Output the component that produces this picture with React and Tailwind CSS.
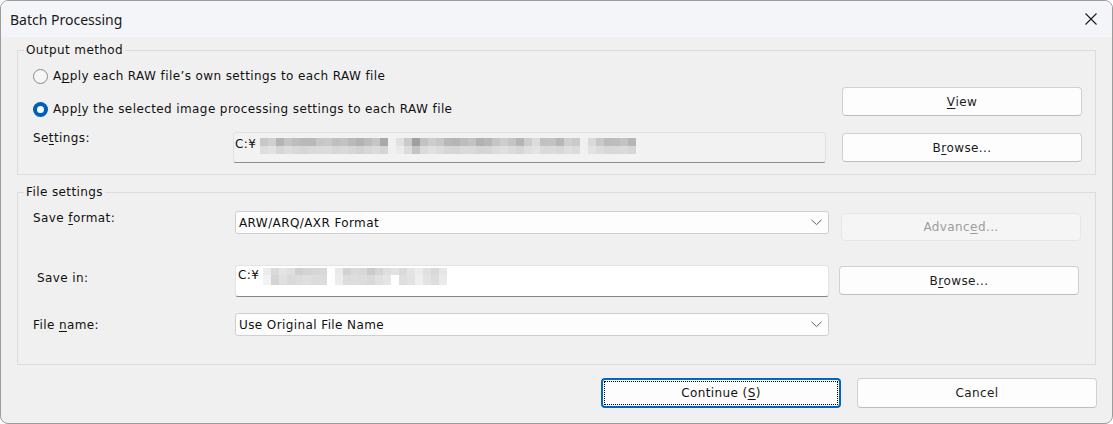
import React from 'react';

// pixelated path placeholder (two rows of grey blocks)
const settingsPath = [
  ['#c8c8c8', '#cfcfcf', '#b4b4b4', '#c4c4c4', '#bdbdbd', '#b9b9b9', '#b9b9b9', '#c6c6c6', '#c9c9c9', '#bfbfbf', '#c3c3c3', '#b9b9b9', '#b2b2b2', '#bcbcbc', '#c6c6c6', '#a8a8a8', '#f0f0f0', '#e0e0e0', '#cacaca', '#9f9f9f', '#c2c2c2', '#cdcdcd', '#c7c7c7', '#b8b8b8', '#b5b5b5', '#bdbdbd', '#c2c2c2', '#b1b1b1', '#b7b7b7', '#c5c5c5', '#cecece', '#c4c4c4', '#b5b5b5', '#cdcdcd', '#dcdcdc', '#c1c1c1', '#c3c3c3', '#b7b7b7', '#cfcfcf', '#cacaca', '#f0f0f0', '#dadada', '#c8c8c8', '#bbbbbb', '#bdbdbd', '#c3c3c3', '#b6b6b6'],
  ['#dedede', '#e2e2e2', '#d6d6d6', '#dcdcdc', '#d8d8d8', '#d6d6d6', '#d9d9d9', '#dadada', '#dbdbdb', '#d7d7d7', '#d9d9d9', '#d6d6d6', '#d2d2d2', '#d7d7d7', '#dbdbdb', '#d4d4d4', '#f0f0f0', '#eaeaea', '#dcdcdc', '#c4c4c4', '#dbdbdb', '#e0e0e0', '#dcdcdc', '#d6d6d6', '#d5d5d5', '#d9d9d9', '#dadada', '#d4d4d4', '#d6d6d6', '#dcdcdc', '#dfdfdf', '#dbdbdb', '#d6d6d6', '#dfdfdf', '#e3e3e3', '#dadada', '#dbdbdb', '#d8d8d8', '#dfdfdf', '#dcdcdc', '#f0f0f0', '#e3e3e3', '#dcdcdc', '#d7d7d7', '#d8d8d8', '#dadada', '#d6d6d6'],
];

const saveInPath = [
  ['#ececec', '#dadada', '#e4e4e4', '#dfdfdf', '#cfcfcf', '#d4d4d4', '#d6d6d6', '#d8d8d8', '#ffffff', '#e9e9e9', '#d2d2d2', '#dadada', '#d8d8d8', '#cbcbcb', '#d5d5d5', '#dedede', '#e2e2e2', '#dadada', '#e4e4e4', '#ebebeb', '#e0e0e0', '#d9d9d9', '#e6e6e6'],
  ['#f2f2f2', '#d4d4d4', '#e0e0e0', '#dadada', '#dcdcdc', '#dfdfdf', '#dcdcdc', '#dcdcdc', '#ffffff', '#ececec', '#dcdcdc', '#dedede', '#dcdcdc', '#d9d9d9', '#e0e0e0', '#e5e5e5', '#ffffff', '#dfdfdf', '#e2e2e2', '#eeeeee', '#e3e3e3', '#dddddd', '#eaeaea'],
];

const Mosaic = ({ rows, cell, rowHeights }) => (
  <div className="flex flex-col">
    {rows.map((row, r) => (
      <div key={r} className="flex">
        {row.map((c, i) => (
          <div key={i} style={{ width: cell, height: rowHeights[r], background: c }} />
        ))}
      </div>
    ))}
  </div>
);

const U = ({ children }) => <span className="underline underline-offset-2">{children}</span>;

const Button = ({ children, className = '', disabled = false }) => (
  <button
    disabled={disabled}
    className={
      'flex items-center justify-center rounded-[4px] border text-[12px] tracking-[0.4px] ' +
      (disabled
        ? 'bg-[#f5f5f5] border-[#e6e6e6] text-[#9d9d9d] '
        : 'bg-[#fdfdfd] border-[#d0d0d0] border-b-[#bebebe] text-[#1b1b1b] ') +
      className
    }
  >
    {children}
  </button>
);

const Chevron = () => (
  <svg width="11" height="7" viewBox="0 0 11 7" className="text-[#606060]">
    <path d="M0.5 0.8 L5.5 5.6 L10.5 0.8" fill="none" stroke="currentColor" strokeWidth="1" />
  </svg>
);

const Select = ({ value, className = '' }) => (
  <div
    className={
      'flex h-[23px] w-[594px] items-center justify-between rounded-[3px] border border-[#cfcfcf] bg-[#fdfdfd] pl-[3px] pr-[6px] ' +
      className
    }
  >
    <span className="text-[12px] text-[#111]">{value}</span>
    <Chevron />
  </div>
);

const Radio = ({ checked, children }) => (
  <div className="flex h-[20px] items-center gap-[5px]">
    {checked ? (
      <span className="flex h-[15px] w-[15px] items-center justify-center rounded-full bg-[#005fb8]">
        <span className="h-[7px] w-[7px] rounded-full bg-white" />
      </span>
    ) : (
      <span className="h-[15px] w-[15px] rounded-full border border-[#8a8a8a] bg-[#f6f6f6]" />
    )}
    <span className="text-[12px] text-[#111]">{children}</span>
  </div>
);

export default function App() {
  return (
    <div
      className="flex h-[424px] w-[1113px] flex-col overflow-hidden rounded-[8px] border border-[#9c9c9c] bg-[#f0f0f0] tracking-[0.4px] text-[#111]"
      style={{ fontFamily: '"DejaVu Sans", Verdana, sans-serif' }}
    >
      {/* title bar */}
      <div className="flex h-[36px] shrink-0 items-center justify-between bg-[#f3f5f8] pl-[9px] pr-[15px]">
        <span
          className="text-[14px] tracking-normal text-[#1a1a1a]"
          style={{ fontFamily: '"Noto Sans", sans-serif' }}
        >
          Batch Processing
        </span>
        <svg width="12" height="12" viewBox="0 0 12 12">
          <path d="M0.5 0.5 L11.5 11.5 M11.5 0.5 L0.5 11.5" stroke="#1a1a1a" strokeWidth="1.1" />
        </svg>
      </div>

      {/* output method */}
      <fieldset className="mx-[16px] mt-[5px] border border-[#dcdcdc] pb-[11px] pl-[15px] pr-[13px]">
        <legend className="-ml-[9px] px-[2px] text-[12px] leading-[16px]">Output method</legend>
        <div className="flex gap-[16px]">
          <div className="flex flex-1 flex-col pt-[8px]">
            <Radio>
              A<U>p</U>ply each RAW file’s own settings to each RAW file
            </Radio>
            <div className="mt-[13px]">
              <Radio checked>
                App<U>l</U>y the selected image processing settings to each RAW file
              </Radio>
            </div>
            <div className="mt-[13px] flex">
              <span className="w-[200px] text-[12px] leading-[13px]">
                Se<U>t</U>tings:
              </span>
              <div className="flex h-[31px] flex-1 items-start rounded-[3px] border border-[#e1e1e1] border-b-[#8c8c8c] bg-[#f2f2f2] pl-[1px] pt-[4px]">
                <span className="text-[12px] leading-[15px]">C:¥</span>
                <div className="ml-[4px] mt-[1px]">
                  <Mosaic rows={settingsPath} cell={8} rowHeights={[8, 8]} />
                </div>
              </div>
            </div>
          </div>
          <div className="flex w-[240px] flex-col gap-[17px] pt-[29px]">
            <Button className="h-[29px]">
              <U>V</U>iew
            </Button>
            <Button className="h-[29px]">
              B<U>r</U>owse...
            </Button>
          </div>
        </div>
      </fieldset>

      {/* file settings */}
      <fieldset className="mx-[16px] mt-[9px] border border-[#dcdcdc] pb-[28px] pl-[15px] pr-[13px]">
        <legend className="-ml-[9px] px-[2px] text-[12px] leading-[16px]">File settings</legend>

        <div className="mt-[11px] flex items-start">
          <span className="mt-[-1px] w-[202px] text-[12px] leading-[16px]">
            Save <U>f</U>ormat:
          </span>
          <Select value="ARW/ARQ/AXR Format" />
          <Button disabled className="ml-[12px] mt-[2px] h-[28px] w-[240px]">
            Advanc<U>e</U>d...
          </Button>
        </div>

        <div className="mt-[24px] flex items-start">
          <span className="mt-[5px] w-[202px] pl-[4px] text-[12px] leading-[16px]">Save in:</span>
          <div className="flex h-[32px] w-[594px] items-start rounded-[3px] border border-[#e3e3e3] border-b-[#868686] bg-white pl-[2px] pt-[1px]">
            <span className="text-[12px] leading-[17px]">C:¥</span>
            <div className="ml-[4px] mt-[1px]">
              <Mosaic rows={saveInPath} cell={8} rowHeights={[7, 10]} />
            </div>
          </div>
          <Button className="ml-[10px] mt-[1px] h-[29px] w-[240px]">
            B<U>r</U>owse...
          </Button>
        </div>

        <div className="mt-[16px] flex items-start">
          <span className="mt-[4px] w-[202px] text-[12px] leading-[16px]">
            File <U>n</U>ame:
          </span>
          <Select value="Use Original File Name" />
        </div>
      </fieldset>

      {/* footer */}
      <div className="mr-[15px] mt-[13px] flex justify-end gap-[16px]">
        <button className="flex h-[30px] w-[240px] items-center justify-center rounded-[4px] border-2 border-[#0067c0] bg-[#fdfdfd] p-[1px]">
          <span className="flex h-full w-full items-center justify-center border border-dotted border-black text-[12px]">
            Continue (<U>S</U>)
          </span>
        </button>
        <Button className="h-[30px] w-[240px]">Cancel</Button>
      </div>
    </div>
  );
}
